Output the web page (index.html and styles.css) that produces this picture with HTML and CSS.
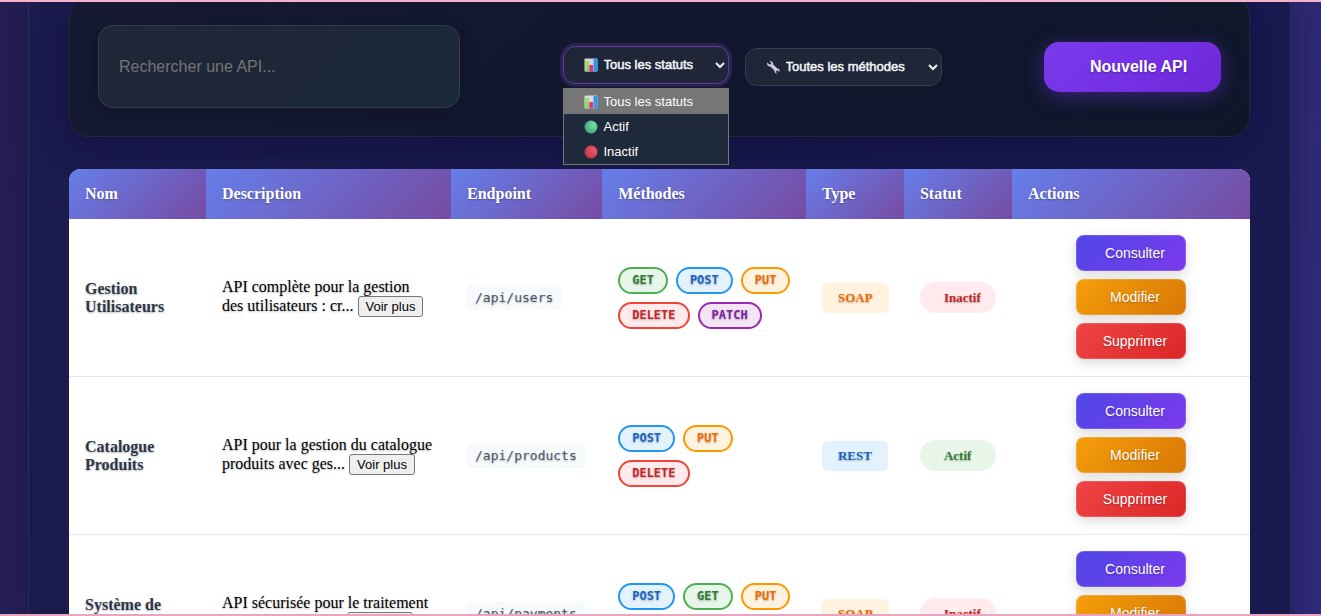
FILE: index.html
```html
<!DOCTYPE html>
<html lang="fr">
<head>
<meta charset="utf-8">
<meta name="viewport" content="width=device-width, initial-scale=1">
<title>Gestion des API</title>
<link rel="stylesheet" href="styles.css">
</head>
<body>
<svg class="defs" width="0" height="0" aria-hidden="true">
  <defs>
    <radialGradient id="green" cx="0.7" cy="0.35" r="0.75"><stop offset="0" stop-color="#6ee7a0"/><stop offset="1" stop-color="#46a078"/></radialGradient>
    <radialGradient id="red" cx="0.7" cy="0.35" r="0.75"><stop offset="0" stop-color="#f0566e"/><stop offset="1" stop-color="#c23547"/></radialGradient>
    <linearGradient id="bar" x1="0" x2="1" y1="0" y2="1"><stop offset="0" stop-color="#b4e65a"/><stop offset="1" stop-color="#6ed272"/></linearGradient>
    <symbol id="chart" viewBox="0 0 14 14"><rect x="0.5" y="0.5" width="13" height="13" rx="1" fill="#dcd5e6"/><rect x="1" y="3" width="4" height="10.5" fill="url(#bar)"/><rect x="5.3" y="7" width="3.7" height="6.500" fill="#e8316f"/><rect x="9.500" y="1" width="4" height="12.500" fill="#3096ea"/></symbol>
    <symbol id="wrench" viewBox="0 0 14 14"><path d="M1 2.600 3.200 4.600 4.900 4.300 5.200 2.700 3.300 1C5.500.5 7.500 2 7.200 4.500L11.300 8.600C13.200 8.300 14 10 13.300 12L11.700 10.500 10.300 10.800 10 12.200 11.400 13.400C9.600 13.700 8.200 12.300 8.600 10.700L4.700 6.700C2.500 7 .5 5 1 2.600Z" fill="#d3c8df"/></symbol>
    <symbol id="dot-green" viewBox="0 0 14 14"><circle cx="7" cy="7" r="6.500" fill="url(#green)"/></symbol>
    <symbol id="dot-red" viewBox="0 0 14 14"><circle cx="7" cy="7" r="6.500" fill="url(#red)"/></symbol>
  </defs>
</svg>
<div class="edge edge-top"></div>
<main class="panel">
  <section class="toolbar">
    <input class="search" type="search" placeholder="Rechercher une API..." aria-label="Rechercher une API">
    <div class="filters">
      <div class="filter filter-open">
        <select class="select" aria-label="Statut">
          <option>Tous les statuts</option><option>Actif</option><option>Inactif</option>
        </select>
        <svg class="select-icon"><use href="#chart"/></svg>
        <ul class="menu" role="listbox" aria-label="Statuts">
          <li class="option option-active" role="option" aria-selected="true"><svg class="icon"><use href="#chart"/></svg>Tous les statuts</li>
          <li class="option" role="option"><svg class="icon"><use href="#dot-green"/></svg>Actif</li>
          <li class="option" role="option"><svg class="icon"><use href="#dot-red"/></svg>Inactif</li>
        </ul>
      </div>
      <div class="filter filter-wide">
        <select class="select" aria-label="Méthode"><option>Toutes les méthodes</option></select>
        <svg class="select-icon"><use href="#wrench"/></svg>
      </div>
    </div>
    <button class="create" type="button">Nouvelle API</button>
  </section>

  <table class="apis">
    <colgroup><col class="c-name"><col class="c-desc"><col class="c-endpoint"><col class="c-methods"><col class="c-type"><col class="c-status"><col class="c-actions"></colgroup>
    <thead>
      <tr><th>Nom</th><th>Description</th><th>Endpoint</th><th>Méthodes</th><th>Type</th><th>Statut</th><th>Actions</th></tr>
    </thead>
    <tbody>
      <tr>
        <td class="name">Gestion Utilisateurs</td>
        <td class="desc">API complète pour la gestion des utilisateurs : cr... <button type="button" class="more">Voir plus</button></td>
        <td><code class="endpoint">/api/users</code></td>
        <td class="methods-cell"><div class="methods"><span class="chip get">GET</span><span class="chip post">POST</span><span class="chip put">PUT</span><span class="chip delete">DELETE</span><span class="chip patch">PATCH</span></div></td>
        <td><span class="type soap">SOAP</span></td>
        <td><span class="status off">Inactif</span></td>
        <td class="actions-cell"><div class="actions"><button type="button" class="action view">Consulter</button><button type="button" class="action edit">Modifier</button><button type="button" class="action remove">Supprimer</button></div></td>
      </tr>
      <tr>
        <td class="name">Catalogue Produits</td>
        <td class="desc">API pour la gestion du catalogue produits avec ges... <button type="button" class="more">Voir plus</button></td>
        <td><code class="endpoint">/api/products</code></td>
        <td class="methods-cell"><div class="methods"><span class="chip post">POST</span><span class="chip put">PUT</span><span class="chip delete">DELETE</span></div></td>
        <td><span class="type rest">REST</span></td>
        <td><span class="status on">Actif</span></td>
        <td class="actions-cell"><div class="actions"><button type="button" class="action view">Consulter</button><button type="button" class="action edit">Modifier</button><button type="button" class="action remove">Supprimer</button></div></td>
      </tr>
      <tr>
        <td class="name">Système de Paiement</td>
        <td class="desc">API sécurisée pour le traitement des paiements en... <button type="button" class="more">Voir plus</button></td>
        <td><code class="endpoint">/api/payments</code></td>
        <td class="methods-cell"><div class="methods"><span class="chip post">POST</span><span class="chip get">GET</span><span class="chip put">PUT</span><span class="chip delete">DELETE</span></div></td>
        <td><span class="type soap">SOAP</span></td>
        <td><span class="status off">Inactif</span></td>
        <td class="actions-cell"><div class="actions"><button type="button" class="action view">Consulter</button><button type="button" class="action edit">Modifier</button><button type="button" class="action remove">Supprimer</button></div></td>
      </tr>
    </tbody>
  </table>
</main>
<div class="edge edge-bottom"></div>
</body>
</html>
```
FILE: styles.css
```css
* { box-sizing: border-box; }

body {
  margin: 0;
  padding: 0 30px 0 28px;
  height: 100vh;
  overflow: hidden;
  font: 16px "Liberation Serif", "Times New Roman", serif;
  text-shadow: 0 1px 2px rgba(0, 0, 0, .3);
  background: linear-gradient(110deg, #251e53, #302b78);
}

button, input, select { font-family: "Liberation Sans", Arial, sans-serif; }

.defs { position: absolute; }

.edge { position: fixed; left: 0; right: 0; height: 2px; background: #f4b4cc; z-index: 5; }
.edge-top { top: 0; }
.edge-bottom { bottom: 0; background: #e8a6be; }

.panel {
  display: flow-root;
  padding: 0 40px;
  border: solid #2c2c5a;
  border-width: 0 1px;
  background: linear-gradient(90deg, #1c1b4e, #171849 50%, #181a50);
  box-shadow: 0 0 30px rgba(15, 8, 45, .35);
}

.toolbar {
  display: flex;
  align-items: center;
  justify-content: space-between;
  gap: 16px;
  margin: -4px 0 32px;
  padding: 28px;
  border: 1px solid #222939;
  border-radius: 20px;
  background: linear-gradient(135deg, #151931, #121730 40%, #0e172a);
  box-shadow: 0 8px 32px rgba(10, 5, 50, .4);
}

.search {
  flex: 0 1 362px;
  min-width: 0;
  height: 83px;
  padding: 0 20px;
  border: 1px solid #343e4d;
  border-radius: 15px;
  font-size: 16px;
  color: #fff;
  background: linear-gradient(135deg, #1f2637, #1b2839);
  box-shadow: 0 4px 16px rgba(0, 0, 0, .2);
}
.search::placeholder { color: #757575; }

.filters { display: flex; gap: 16px; }
.filter { position: relative; width: 166px; }
.filter-open { transform: translateY(-2px); }
.filter-wide { width: 197px; }

.select {
  display: block;
  width: 100%;
  height: 38px;
  padding: 0 0 0 36px;
  border: 1px solid #343e4d;
  border-radius: 12px;
  outline: 0;
  font-size: 13px;
  -webkit-text-stroke: 0.5px #f4f5f8;
  color: #f4f5f8;
  background: #1e2638;
}
.filter-open .select {
  border-color: #5b3fa3;
  box-shadow: 0 0 0 3px #29214e;
}
.select-icon, .icon { width: 14px; height: 14px; }
.select-icon { position: absolute; left: 21px; top: 12px; pointer-events: none; }

.menu {
  position: absolute;
  top: 42px;
  left: 0;
  right: 0;
  z-index: 2;
  margin: 0;
  padding: 0;
  border: 1px solid #767676;
  list-style: none;
  font: 13px/24px "Liberation Sans", Arial, sans-serif;
  color: #fff;
  text-shadow: none;
  background: #1e293b;
}
.option { display: flex; align-items: center; gap: 6px; padding: 1px 0 0 20px; }
.option-active { background: #767676; }

.create {
  min-width: 177px;
  height: 50px;
  padding: 0 32px 0 44px;
  border: 0;
  border-radius: 15px;
  font-size: 16px;
  font-weight: 700;
  color: #fff;
  text-shadow: 0 1px 2px rgba(0, 0, 0, .3);
  background: linear-gradient(135deg, #7c3aed, #6d28d9);
  box-shadow: 0 4px 20px rgba(124, 58, 237, .4);
}

.apis {
  width: 100%;
  table-layout: fixed;
  border-spacing: 0;
  border-radius: 12px;
  overflow: hidden;
  background: #fff;
}
.c-name { width: 11.6%; }
.c-desc { width: 20.75%; }
.c-endpoint { width: 12.8%; }
.c-methods { width: 17.25%; }
.c-type { width: 8.3%; }
.c-status { width: 9.15%; }

th {
  padding: 16px;
  text-align: left;
  color: #fff;
  background: linear-gradient(135deg, #667eea, #764ba2);
}
td { padding: 16px; border-bottom: 1px solid #e2e8f0; vertical-align: middle; }
tbody tr { height: 158px; }
.name { font-weight: 700; color: #2d3748; }
.desc { padding-right: 18px; }
.methods-cell { padding-right: 12px; }
.actions-cell { padding-bottom: 17px; }

.more {
  padding: 2px 7px;
  border: 1px solid #767676;
  border-radius: 3px;
  font-size: 13px;
  color: #000;
  background: #efefef;
}

.endpoint {
  display: inline-block;
  padding: 4px 8px;
  border-radius: 4px;
  font: 13px/17px "DejaVu Sans Mono", monospace;
  color: #4a5568;
  background: #f7fafc;
}

.methods { display: flex; flex-wrap: wrap; gap: 8px; }
.chip {
  padding: 0 12px;
  border: 2px solid;
  border-radius: 14px;
  font: 700 12px/23px "DejaVu Sans Mono", monospace;
}
.get { color: #2e7d32; border-color: #4caf50; background: #e8f5e9; }
.post { color: #1565c0; border-color: #2196f3; background: #e3f2fd; }
.put { color: #ef6c00; border-color: #ff9800; background: #fff3e0; }
.delete { color: #c62828; border-color: #f44336; background: #ffebee; }
.patch { color: #7b1fa2; border-color: #9c27b0; background: #f3e5f5; }

.type {
  display: inline-block;
  padding: 0 16px;
  border-radius: 6px;
  font-size: 13px;
  font-weight: 700;
  line-height: 30px;
}
.soap { color: #ef6c00; background: #fff3e0; }
.rest { color: #1565c0; background: #e3f2fd; }

.status {
  display: inline-block;
  width: 76px;
  padding-left: 24px;
  border-radius: 20px;
  font-size: 13px;
  font-weight: 700;
  line-height: 31px;
}
.off { color: #c62828; background: #ffebee; }
.on { color: #2e7d32; background: #e8f5e9; }

.actions { display: flex; flex-direction: column; align-items: center; gap: 8px; }
.action {
  width: 110px;
  height: 36px;
  padding: 0 0 0 8px;
  border: 1px solid rgba(255, 255, 255, .15);
  border-radius: 8px;
  font-size: 14px;
  color: #fff;
  text-shadow: 0 1px 2px rgba(0, 0, 0, .3);
  background-origin: border-box;
  box-shadow: 0 4px 12px rgba(0, 0, 0, .15);
}
.view { background-image: linear-gradient(135deg, #4f46e5, #7c3aed); }
.edit { background-image: linear-gradient(135deg, #f59e0b, #d97706); }
.remove { background-image: linear-gradient(135deg, #ef4444, #dc2626); }
```
